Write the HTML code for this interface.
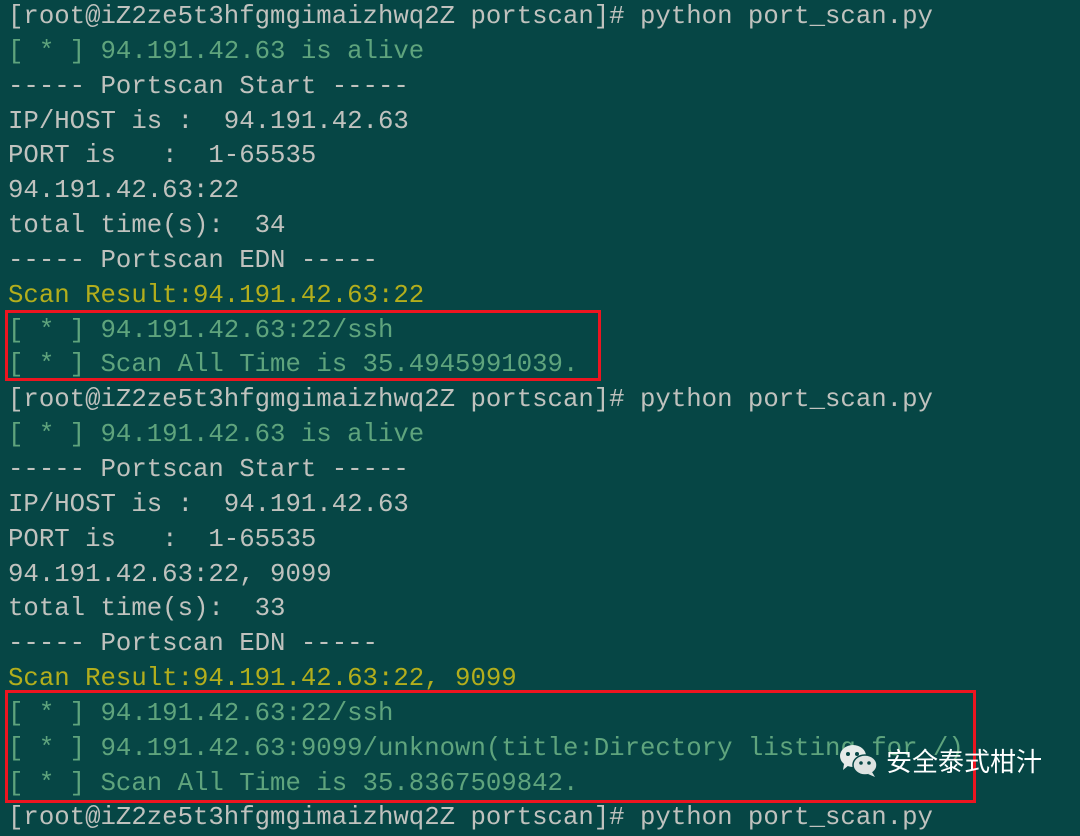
<!DOCTYPE html>
<html><head><meta charset="utf-8"><style>
html,body{margin:0;padding:0;}
body{width:1080px;height:809px;overflow:hidden;background:#064645;position:relative;}
.t{position:absolute;left:8px;top:0px;font-family:"Liberation Mono",monospace;font-size:25.7px;line-height:34.85px;white-space:pre;color:#c0c2be;}
.g{color:#5fa47d;}
.y{color:#b3ae1c;}
.box{position:absolute;border:3px solid #ec1520;box-sizing:border-box;}
.wm{position:absolute;left:838px;top:742px;display:flex;align-items:center;color:#fff;font-family:"Liberation Sans","Noto Sans CJK SC",sans-serif;font-size:26px;}
</style></head><body>
<div class="t">[root@iZ2ze5t3hfgmgimaizhwq2Z portscan]# python port_scan.py
<span class="g">[ * ] 94.191.42.63 is alive</span>
----- Portscan Start -----
IP/HOST is :  94.191.42.63
PORT is   :  1-65535
94.191.42.63:22
total time(s):  34
----- Portscan EDN -----
<span class="y">Scan Result:94.191.42.63:22</span>
<span class="g">[ * ] 94.191.42.63:22/ssh</span>
<span class="g">[ * ] Scan All Time is 35.4945991039.</span>
[root@iZ2ze5t3hfgmgimaizhwq2Z portscan]# python port_scan.py
<span class="g">[ * ] 94.191.42.63 is alive</span>
----- Portscan Start -----
IP/HOST is :  94.191.42.63
PORT is   :  1-65535
94.191.42.63:22, 9099
total time(s):  33
----- Portscan EDN -----
<span class="y">Scan Result:94.191.42.63:22, 9099</span>
<span class="g">[ * ] 94.191.42.63:22/ssh</span>
<span class="g">[ * ] 94.191.42.63:9099/unknown(title:Directory listing for /)</span>
<span class="g">[ * ] Scan All Time is 35.8367509842.</span>
[root@iZ2ze5t3hfgmgimaizhwq2Z portscan]# python port_scan.py</div>
<div class="box" style="left:5px;top:310px;width:596px;height:71px;"></div>
<div class="box" style="left:5px;top:690px;width:971px;height:113px;"></div>
<div class="wm">
<svg width="42" height="36" viewBox="0 0 42 36" style="margin-right:6px">
<ellipse cx="15" cy="13" rx="13" ry="11" fill="#e6ebe9"/>
<path d="M6 21 L5 27 L11 22 Z" fill="#e6ebe9"/>
<circle cx="10" cy="11" r="2" fill="#064645"/><circle cx="19" cy="11" r="2" fill="#064645"/>
<ellipse cx="27" cy="22" rx="12" ry="10" fill="#dde3e1" stroke="#064645" stroke-width="1.5"/>
<path d="M34 29 L37 34 L30 31 Z" fill="#dde3e1"/>
<circle cx="23" cy="20" r="1.8" fill="#064645"/><circle cx="31" cy="20" r="1.8" fill="#064645"/>
</svg>安全泰式柑汁</div>
</body></html>
